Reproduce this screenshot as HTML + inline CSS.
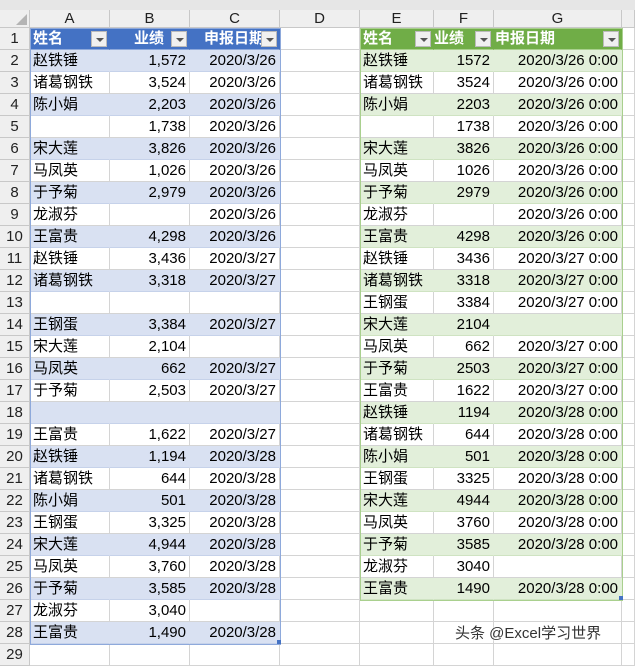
<!DOCTYPE html>
<html><head><meta charset="utf-8"><style>
*{box-sizing:border-box;margin:0;padding:0}
body{width:635px;height:655px;overflow:hidden;background:#fff;font-family:"Liberation Sans","Noto Sans CJK SC",sans-serif;font-size:15px;color:#000;position:relative}
.top{position:absolute;left:0;top:0;width:635px;height:10px;background:#e6e6e6}
.r{position:absolute;left:0;height:22px;display:flex;white-space:nowrap}
.c{height:22px;line-height:21px;border-right:1px solid #d4d4d4;border-bottom:1px solid #d4d4d4;overflow:hidden;padding:0 3px}
.h{background:#efefef;text-align:center;color:#222;border-color:#c8c8c8}
.w0{width:30px}.w1{width:80px}.w2{width:80px}.w3{width:90px}.w4{width:80px}.w5{width:74px}.w6{width:60px}.w7{width:128px}.w8{width:13px}
.R{text-align:right}
.bb{background:#d9e1f2;border-right-color:#d9e1f2;border-bottom-color:#c6d2ea}
.gb{background:#e2efda;border-right-color:#e2efda;border-bottom-color:#cfe3c2}
.bh{background:#4472c4;color:#fff;font-weight:bold;position:relative;border-right-color:#4472c4;border-bottom-color:#8ea9db}
.gh{background:#70ad47;color:#fff;font-weight:bold;position:relative;border-right-color:#70ad47;border-bottom-color:#a9d08e}
.dd{position:absolute;right:2px;top:3px;width:16px;height:16px;background:#f0f0f0;border:1px solid #bbb}
.dd:after{content:"";position:absolute;left:4px;top:6px;border-left:4px solid transparent;border-right:4px solid transparent;border-top:4px solid #555}
.box{position:absolute;pointer-events:none}
</style></head><body>
<div class="top"></div>
<div class="r" style="top:10px;height:18px">
<div class="c h w0" style="height:18px;position:relative"><div style="position:absolute;right:2px;bottom:2px;border-left:11px solid transparent;border-bottom:11px solid #b4b4b4"></div></div>
<div class="c h w1" style="height:18px;line-height:17px">A</div><div class="c h w2" style="height:18px;line-height:17px">B</div><div class="c h w3" style="height:18px;line-height:17px">C</div><div class="c h w4" style="height:18px;line-height:17px">D</div><div class="c h w5" style="height:18px;line-height:17px">E</div><div class="c h w6" style="height:18px;line-height:17px">F</div><div class="c h w7" style="height:18px;line-height:17px">G</div><div class="c h w8" style="height:18px"></div></div>

<div class="r" style="top:28px"><div class="c h w0">1</div><div class="c w1 bh">姓名<span class="dd"></span></div><div class="c w2 bh" style="padding-left:24px">业绩<span class="dd"></span></div><div class="c w3 bh" style="padding-left:14px">申报日期<span class="dd"></span></div><div class="c w4"></div><div class="c w5 gh">姓名<span class="dd"></span></div><div class="c w6 gh" style="padding-left:0">业绩<span class="dd"></span></div><div class="c w7 gh" style="padding-left:1px">申报日期<span class="dd"></span></div><div class="c w8"></div></div>

<div class="r" style="top:50px"><div class="c h w0">2</div><div class="c w1 bb">赵铁锤</div><div class="c w2 bb R">1,572</div><div class="c w3 bb R">2020/3/26</div><div class="c w4"></div><div class="c w5 gb">赵铁锤</div><div class="c w6 gb R">1572</div><div class="c w7 gb R">2020/3/26 0:00</div><div class="c w8"></div></div>
<div class="r" style="top:72px"><div class="c h w0">3</div><div class="c w1">诸葛钢铁</div><div class="c w2 R">3,524</div><div class="c w3 R">2020/3/26</div><div class="c w4"></div><div class="c w5">诸葛钢铁</div><div class="c w6 R">3524</div><div class="c w7 R">2020/3/26 0:00</div><div class="c w8"></div></div>
<div class="r" style="top:94px"><div class="c h w0">4</div><div class="c w1 bb">陈小娟</div><div class="c w2 bb R">2,203</div><div class="c w3 bb R">2020/3/26</div><div class="c w4"></div><div class="c w5 gb">陈小娟</div><div class="c w6 gb R">2203</div><div class="c w7 gb R">2020/3/26 0:00</div><div class="c w8"></div></div>
<div class="r" style="top:116px"><div class="c h w0">5</div><div class="c w1"></div><div class="c w2 R">1,738</div><div class="c w3 R">2020/3/26</div><div class="c w4"></div><div class="c w5"></div><div class="c w6 R">1738</div><div class="c w7 R">2020/3/26 0:00</div><div class="c w8"></div></div>
<div class="r" style="top:138px"><div class="c h w0">6</div><div class="c w1 bb">宋大莲</div><div class="c w2 bb R">3,826</div><div class="c w3 bb R">2020/3/26</div><div class="c w4"></div><div class="c w5 gb">宋大莲</div><div class="c w6 gb R">3826</div><div class="c w7 gb R">2020/3/26 0:00</div><div class="c w8"></div></div>
<div class="r" style="top:160px"><div class="c h w0">7</div><div class="c w1">马凤英</div><div class="c w2 R">1,026</div><div class="c w3 R">2020/3/26</div><div class="c w4"></div><div class="c w5">马凤英</div><div class="c w6 R">1026</div><div class="c w7 R">2020/3/26 0:00</div><div class="c w8"></div></div>
<div class="r" style="top:182px"><div class="c h w0">8</div><div class="c w1 bb">于予菊</div><div class="c w2 bb R">2,979</div><div class="c w3 bb R">2020/3/26</div><div class="c w4"></div><div class="c w5 gb">于予菊</div><div class="c w6 gb R">2979</div><div class="c w7 gb R">2020/3/26 0:00</div><div class="c w8"></div></div>
<div class="r" style="top:204px"><div class="c h w0">9</div><div class="c w1">龙淑芬</div><div class="c w2 R"></div><div class="c w3 R">2020/3/26</div><div class="c w4"></div><div class="c w5">龙淑芬</div><div class="c w6 R"></div><div class="c w7 R">2020/3/26 0:00</div><div class="c w8"></div></div>
<div class="r" style="top:226px"><div class="c h w0">10</div><div class="c w1 bb">王富贵</div><div class="c w2 bb R">4,298</div><div class="c w3 bb R">2020/3/26</div><div class="c w4"></div><div class="c w5 gb">王富贵</div><div class="c w6 gb R">4298</div><div class="c w7 gb R">2020/3/26 0:00</div><div class="c w8"></div></div>
<div class="r" style="top:248px"><div class="c h w0">11</div><div class="c w1">赵铁锤</div><div class="c w2 R">3,436</div><div class="c w3 R">2020/3/27</div><div class="c w4"></div><div class="c w5">赵铁锤</div><div class="c w6 R">3436</div><div class="c w7 R">2020/3/27 0:00</div><div class="c w8"></div></div>
<div class="r" style="top:270px"><div class="c h w0">12</div><div class="c w1 bb">诸葛钢铁</div><div class="c w2 bb R">3,318</div><div class="c w3 bb R">2020/3/27</div><div class="c w4"></div><div class="c w5 gb">诸葛钢铁</div><div class="c w6 gb R">3318</div><div class="c w7 gb R">2020/3/27 0:00</div><div class="c w8"></div></div>
<div class="r" style="top:292px"><div class="c h w0">13</div><div class="c w1"></div><div class="c w2"></div><div class="c w3"></div><div class="c w4"></div><div class="c w5">王钢蛋</div><div class="c w6 R">3384</div><div class="c w7 R">2020/3/27 0:00</div><div class="c w8"></div></div>
<div class="r" style="top:314px"><div class="c h w0">14</div><div class="c w1 bb">王钢蛋</div><div class="c w2 bb R">3,384</div><div class="c w3 bb R">2020/3/27</div><div class="c w4"></div><div class="c w5 gb">宋大莲</div><div class="c w6 gb R">2104</div><div class="c w7 gb R"></div><div class="c w8"></div></div>
<div class="r" style="top:336px"><div class="c h w0">15</div><div class="c w1">宋大莲</div><div class="c w2 R">2,104</div><div class="c w3 R"></div><div class="c w4"></div><div class="c w5">马凤英</div><div class="c w6 R">662</div><div class="c w7 R">2020/3/27 0:00</div><div class="c w8"></div></div>
<div class="r" style="top:358px"><div class="c h w0">16</div><div class="c w1 bb">马凤英</div><div class="c w2 bb R">662</div><div class="c w3 bb R">2020/3/27</div><div class="c w4"></div><div class="c w5 gb">于予菊</div><div class="c w6 gb R">2503</div><div class="c w7 gb R">2020/3/27 0:00</div><div class="c w8"></div></div>
<div class="r" style="top:380px"><div class="c h w0">17</div><div class="c w1">于予菊</div><div class="c w2 R">2,503</div><div class="c w3 R">2020/3/27</div><div class="c w4"></div><div class="c w5">王富贵</div><div class="c w6 R">1622</div><div class="c w7 R">2020/3/27 0:00</div><div class="c w8"></div></div>
<div class="r" style="top:402px"><div class="c h w0">18</div><div class="c w1 bb"></div><div class="c w2 bb"></div><div class="c w3 bb"></div><div class="c w4"></div><div class="c w5 gb">赵铁锤</div><div class="c w6 gb R">1194</div><div class="c w7 gb R">2020/3/28 0:00</div><div class="c w8"></div></div>
<div class="r" style="top:424px"><div class="c h w0">19</div><div class="c w1">王富贵</div><div class="c w2 R">1,622</div><div class="c w3 R">2020/3/27</div><div class="c w4"></div><div class="c w5">诸葛钢铁</div><div class="c w6 R">644</div><div class="c w7 R">2020/3/28 0:00</div><div class="c w8"></div></div>
<div class="r" style="top:446px"><div class="c h w0">20</div><div class="c w1 bb">赵铁锤</div><div class="c w2 bb R">1,194</div><div class="c w3 bb R">2020/3/28</div><div class="c w4"></div><div class="c w5 gb">陈小娟</div><div class="c w6 gb R">501</div><div class="c w7 gb R">2020/3/28 0:00</div><div class="c w8"></div></div>
<div class="r" style="top:468px"><div class="c h w0">21</div><div class="c w1">诸葛钢铁</div><div class="c w2 R">644</div><div class="c w3 R">2020/3/28</div><div class="c w4"></div><div class="c w5">王钢蛋</div><div class="c w6 R">3325</div><div class="c w7 R">2020/3/28 0:00</div><div class="c w8"></div></div>
<div class="r" style="top:490px"><div class="c h w0">22</div><div class="c w1 bb">陈小娟</div><div class="c w2 bb R">501</div><div class="c w3 bb R">2020/3/28</div><div class="c w4"></div><div class="c w5 gb">宋大莲</div><div class="c w6 gb R">4944</div><div class="c w7 gb R">2020/3/28 0:00</div><div class="c w8"></div></div>
<div class="r" style="top:512px"><div class="c h w0">23</div><div class="c w1">王钢蛋</div><div class="c w2 R">3,325</div><div class="c w3 R">2020/3/28</div><div class="c w4"></div><div class="c w5">马凤英</div><div class="c w6 R">3760</div><div class="c w7 R">2020/3/28 0:00</div><div class="c w8"></div></div>
<div class="r" style="top:534px"><div class="c h w0">24</div><div class="c w1 bb">宋大莲</div><div class="c w2 bb R">4,944</div><div class="c w3 bb R">2020/3/28</div><div class="c w4"></div><div class="c w5 gb">于予菊</div><div class="c w6 gb R">3585</div><div class="c w7 gb R">2020/3/28 0:00</div><div class="c w8"></div></div>
<div class="r" style="top:556px"><div class="c h w0">25</div><div class="c w1">马凤英</div><div class="c w2 R">3,760</div><div class="c w3 R">2020/3/28</div><div class="c w4"></div><div class="c w5">龙淑芬</div><div class="c w6 R">3040</div><div class="c w7 R"></div><div class="c w8"></div></div>
<div class="r" style="top:578px"><div class="c h w0">26</div><div class="c w1 bb">于予菊</div><div class="c w2 bb R">3,585</div><div class="c w3 bb R">2020/3/28</div><div class="c w4"></div><div class="c w5 gb">王富贵</div><div class="c w6 gb R">1490</div><div class="c w7 gb R">2020/3/28 0:00</div><div class="c w8"></div></div>
<div class="r" style="top:600px"><div class="c h w0">27</div><div class="c w1">龙淑芬</div><div class="c w2 R">3,040</div><div class="c w3 R"></div><div class="c w4"></div><div class="c w5"></div><div class="c w6"></div><div class="c w7"></div><div class="c w8"></div></div>
<div class="r" style="top:622px"><div class="c h w0">28</div><div class="c w1 bb">王富贵</div><div class="c w2 bb R">1,490</div><div class="c w3 bb R">2020/3/28</div><div class="c w4"></div><div class="c w5"></div><div class="c w6"></div><div class="c w7"></div><div class="c w8"></div></div>
<div class="r" style="top:644px"><div class="c h w0">29</div><div class="c w1"></div><div class="c w2"></div><div class="c w3"></div><div class="c w4"></div><div class="c w5"></div><div class="c w6"></div><div class="c w7"></div><div class="c w8"></div></div>

<div class="box" style="left:30px;top:28px;width:251px;height:617px;border:1px solid #8ea9db"></div>
<div class="box" style="left:360px;top:28px;width:263px;height:573px;border:1px solid #a9d08e"></div>
<div class="box" style="left:277px;top:640px;width:4px;height:4px;background:#4472c4"></div>
<div class="box" style="left:619px;top:596px;width:4px;height:4px;background:#4472c4"></div>
<div class="box" style="left:455px;top:622px;font-size:15px;color:#333;text-shadow:0 0 2px #fff,0 0 2px #fff">头条 @Excel学习世界</div>
</body></html>
